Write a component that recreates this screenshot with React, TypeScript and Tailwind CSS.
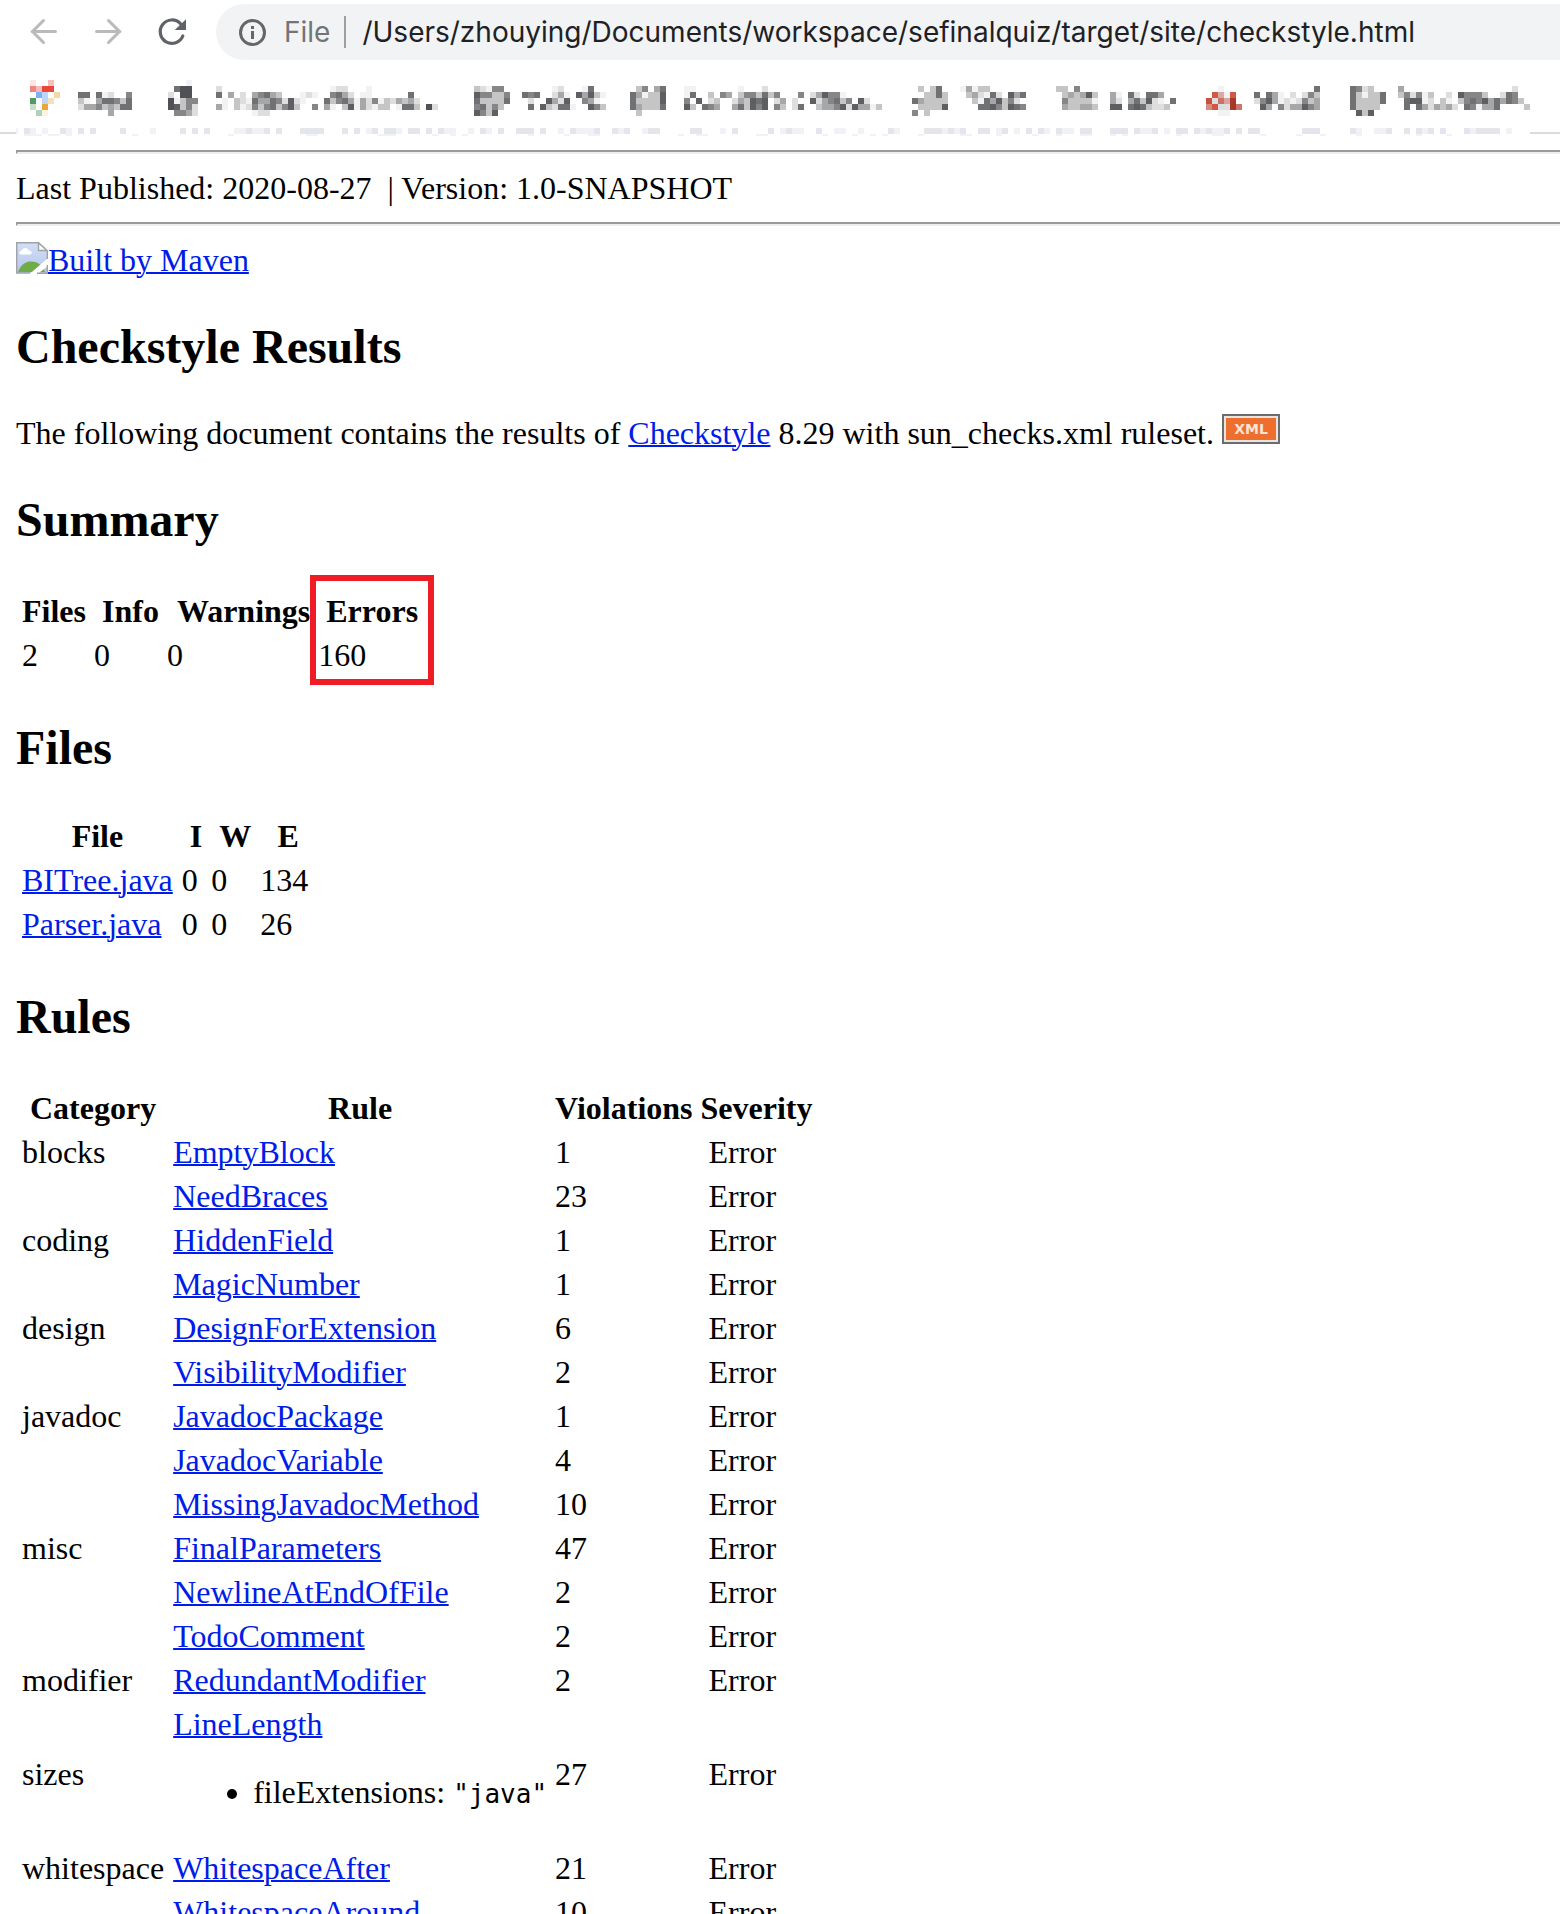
import React from "react";

const CELL = 6;

const PALETTE: Record<string, string> = {
  "1": "#f2f2f2",
  "2": "#dedede",
  "3": "#c5c5c5",
  "4": "#a6a7a9",
  "5": "#868688",
  "6": "#707173",
  "7": "#5e5f62",
  "8": "#505157",
  A: "#fbe8e6",
  B: "#f5c0bc",
  C: "#ef8680",
  D: "#f5bcb8",
  E: "#e8483c",
  F: "#7fb0f4",
  G: "#bcd6f8",
  H: "#f6d7a8",
  I: "#539a60",
  J: "#f5dfbc",
  K: "#c8dfcc",
  L: "#eaa636",
  M: "#b0d2b8",
  N: "#fdf3e4",
  P: "#d05848",
  Q: "#dba9a4",
  R: "#c8503f",
  S: "#c87368",
  T: "#d9a5a0",
  U: "#a83828",
  V: "#d98a80",
  W: "#c8776c",
  a: "#e5e6eb",
  b: "#f1f2f5",
};

const DOTS18 = "..................";

const BOOKMARKS: { name: string; cols: number; rows: string[] }[] = [
  {
    name: "Bookmark 1",
    cols: 19,
    rows: ["A..B", "CDEE", ".FG.H...66.612..5", "I.GJ....31.466536", "K.L.....244534366", ".MN..........4"],
  },
  {
    name: "Bookmark 2",
    cols: 47,
    rows: [
      "...1",
      ".688....2" + DOTS18 + "122...1",
      "2.88....6.4.2.45643...121..5642.11......6",
      "81355....1.321644652721...6356414251324342",
      "87352...41.31253563573..5.41.37142133.1663.82",
      ".5542.........122",
    ],
  },
  {
    name: "Bookmark 3",
    cols: 22,
    rows: ["", "32155........12...16", "755335..656..241.74731", "633336...2..7427..541", "56353....6.732661..753", "7537"],
  },
  {
    name: "Bookmark 4",
    cols: 43,
    rows: [
      "",
      ".35.46...11.......1...2",
      "641337...16..3.54.3553635...5.247551",
      "633337...5.7.23..243767.24.2..7245635.72",
      "643336...73.654..463757.53.26..34457274413",
      ".3",
    ],
  },
  {
    name: "Bookmark 5",
    cols: 20,
    rows: ["", ".3.36...14133", "..3363...342162.746", "643333....31647352", ".33337.....66753765", "5.3"],
  },
  {
    name: "Bookmark 6",
    cols: 21,
    rows: ["", "33.5", ".343473..41.62.664", ".533331..42.463721.6", ".433443..77.6763223", ""],
  },
  {
    name: "Bookmark 7",
    cols: 20,
    rows: ["", "..1...............6", ".PQ1P...6.641.2.253", "R2STU...25741212534", "VP22UW...74.5244754", "..11"],
  },
  {
    name: "Bookmark 8",
    cols: 30,
    rows: [
      "",
      "6523....4" + DOTS18 + "2",
      "631336..352513..2.75553..265",
      "633336...67712.31.35657464653",
      "63333....6.6424342.651446....3",
      ".737",
    ],
  },
];

function Mosaic({ cols, rows }: { cols: number; rows: string[] }) {
  return (
    <svg width={cols * CELL} height={rows.length * CELL} shapeRendering="crispEdges" aria-hidden="true" className="block">
      {rows.map((row, y) =>
        row.split("").map((c, x) =>
          PALETTE[c] ? <rect key={`${x}-${y}`} x={x * CELL} y={y * CELL} width={CELL} height={CELL} fill={PALETTE[c]} /> : null,
        ),
      )}
    </svg>
  );
}

/* Grid columns of the pixelated strip along the bottom edge of the bookmarks bar. */
const STRIP_DARK = [
  4, 10, 13, 15, 20, 30, 32, 34, 41, 44, 46, 50, 51, 52, 53, 57, 59, 62, 64, 65, 68, 69, 71, 73, 80, 83, 86, 87, 88, 90, 95,
  99, 102, 104, 108, 109, 115, 116, 122, 128, 131, 136, 148, 154, 155, 156, 158, 160, 163, 164, 167, 171, 173, 176, 180, 181,
  185, 186, 187, 189, 192, 196, 197, 199, 201, 204, 206, 208, 209, 217, 218, 219, 225, 231, 234, 236, 238, 240, 244, 246, 247,
  248, 249,
];
const STRIP_LIGHT = [
  5, 7, 11, 25, 39, 40, 42, 43, 61, 66, 74, 75, 78, 81, 93, 96, 97, 98, 103, 107, 120, 130, 132, 133, 139, 140, 143, 149, 157,
  159, 166, 169, 174, 177, 178, 190, 191, 194, 200, 202, 203, 226, 229, 230, 237, 245, 251,
];
const STRIP_LOWER = [
  4, 5, 6, 8, 9, 11, 22, 38, 51, 52, 63, 64, 65, 72, 75, 77, 88, 94, 98, 99, 113, 116, 117, 126, 127, 137, 142, 145, 147, 153,
  160, 161, 166, 172, 176, 180, 181, 185, 187, 196, 202, 203, 210, 216, 220, 226, 236, 241,
];

function Strip() {
  const x = (c: number) => (c - 3) * CELL + 2;
  return (
    <svg width={1514} height={8} shapeRendering="crispEdges" aria-hidden="true" className="block shrink-0">
      <rect x={0} y={0} width={2} height={6} fill={PALETTE.b} />
      {STRIP_DARK.map((c) => (
        <rect key={c} x={x(c)} y={0} width={CELL} height={6} fill={PALETTE.a} />
      ))}
      {STRIP_LIGHT.map((c) => (
        <rect key={c} x={x(c)} y={0} width={CELL} height={6} fill={PALETTE.b} />
      ))}
      {STRIP_LOWER.map((c) => (
        <rect key={`l${c}`} x={x(c)} y={6} width={CELL} height={2} fill={PALETTE.b} />
      ))}
    </svg>
  );
}

function BrowserBar() {
  return (
    <header className="shrink-0 font-[Inter,'Liberation_Sans',sans-serif]">
      <div className="flex items-center pt-1">
        <nav className="flex w-54 shrink-0 items-center gap-8 pl-7" aria-label="History">
          <button type="button" aria-label="Back">
            <svg width="32" height="32" viewBox="0 0 32 32" fill="none" stroke="#b9babc" strokeWidth="3" strokeLinecap="round" className="block">
              <path d="M27.500 15.500H4M15.500 4.500L4.500 15.500L15.500 26.500" />
            </svg>
          </button>
          <button type="button" aria-label="Forward">
            <svg width="32" height="32" viewBox="0 0 32 32" fill="none" stroke="#b9babc" strokeWidth="3" strokeLinecap="round" className="block">
              <path d="M4.500 15.500H28M16.500 4.500L27.500 15.500L16.500 26.500" />
            </svg>
          </button>
          <button type="button" aria-label="Reload">
            <svg width="32" height="32" viewBox="0 0 32 32" fill="none" className="block">
              <path d="M24.400 7.600A11.700 11.700 0 1 0 26.800 20" stroke="#5f6368" strokeWidth="3.200" strokeLinecap="round" />
              <path d="M30 3.300V14H18.700Z" fill="#5f6368" />
            </svg>
          </button>
        </nav>
        <div className="flex h-14 flex-1 items-center rounded-l-full bg-[#f1f3f4] pl-5.5">
          <svg width="28" height="28" viewBox="0 0 28 28" fill="none" stroke="#646668" strokeWidth="3" className="block shrink-0">
            <circle cx="14.500" cy="14.500" r="12" />
            <path d="M14.500 13V21M14.500 8V11" />
          </svg>
          <label htmlFor="address" className="ml-4.5 text-[28px] text-[#727476]">
            File
          </label>
          <span className="ml-3.5 h-8 w-0.5 bg-[#9c9ea0]" />
          <input
            id="address"
            type="text"
            readOnly
            value="/Users/zhouying/Documents/workspace/sefinalquiz/target/site/checkstyle.html"
            className="ml-4 min-w-0 flex-1 bg-transparent text-[28px] text-[#202124] outline-none"
          />
        </div>
      </div>
      <nav className="flex gap-6 pt-5 pb-3 pl-7.5" aria-label="Bookmarks">
        {BOOKMARKS.map((b) => (
          <a key={b.name} href="#bookmark" aria-label={b.name} className="shrink-0">
            <Mosaic cols={b.cols} rows={b.rows} />
          </a>
        ))}
      </nav>
      <div className="flex">
        <span className="mt-1 h-0.5 w-4 shrink-0 bg-[#dadbe0]" />
        <Strip />
        <span className="mt-1 h-0.5 flex-1 bg-[#dadbe0]" />
      </div>
    </header>
  );
}

function BrokenImage() {
  return (
    <svg width="32" height="32" viewBox="0 0 32 32" className="inline-block align-top" aria-hidden="true">
      <defs>
        <linearGradient id="sky" x1="0" y1="0" x2="0" y2="1">
          <stop offset="0" stopColor="#d3dff5" />
          <stop offset="1" stopColor="#b4c6ee" />
        </linearGradient>
      </defs>
      <path d="M1 1H22.5L31 9V31H1Z" fill="url(#sky)" />
      <path d="M2 30C5 22 10 19.5 15 19.5C22 19.5 27 24 29 30Z" fill="#6fab46" />
      <path d="M5 12.5C2.500 12.500 2.800 8.800 5.500 8.800C6.500 5 12 5 12.800 8.500C16.500 8.500 16.500 12.500 14 12.500Z" fill="#fff" />
      <path d="M13.500 32L32 16V24L21.500 32Z" fill="#fff" />
      <path d="M14 31H0.700V0.700H22.500L31.300 9V17M31.300 23V31.300H21" fill="none" stroke="#a0a2a6" strokeWidth="1.400" />
      <path d="M22.500 1V8.500H31Z" fill="#fff" stroke="#a0a2a6" strokeWidth="1.400" />
    </svg>
  );
}

function Link({ children }: { children: React.ReactNode }) {
  return (
    <a href="#link" className="text-[#001ce8] underline decoration-2">
      {children}
    </a>
  );
}

const Rule = () => <hr className="h-1 border-2 border-r-0 border-t-[#9a9a9a] border-b-[#eeeeee] border-l-[#9a9a9a]" />;

const Heading = ({ children }: { children: React.ReactNode }) => (
  <h2 className="mt-[41px] mb-[39px] text-[48px] leading-[56px] font-bold">{children}</h2>
);

const TABLE = "border-separate border-spacing-1 [&_td]:p-0.5 [&_th]:p-0.5 [&_th]:text-center whitespace-nowrap";
const FILES_TABLE =
  "-mt-[3px] border-separate border-spacing-1 [&_td]:p-0.5 [&_td]:pr-[3px] [&_th]:p-0.5 [&_th]:pr-[3px] [&_th]:text-center whitespace-nowrap";

const RULES: [string, string, number][] = [
  ["blocks", "EmptyBlock", 1],
  ["", "NeedBraces", 23],
  ["coding", "HiddenField", 1],
  ["", "MagicNumber", 1],
  ["design", "DesignForExtension", 6],
  ["", "VisibilityModifier", 2],
  ["javadoc", "JavadocPackage", 1],
  ["", "JavadocVariable", 4],
  ["", "MissingJavadocMethod", 10],
  ["misc", "FinalParameters", 47],
  ["", "NewlineAtEndOfFile", 2],
  ["", "TodoComment", 2],
  ["modifier", "RedundantModifier", 2],
  ["sizes", "LineLength", 27],
  ["whitespace", "WhitespaceAfter", 21],
  ["", "WhitespaceAround", 10],
];

export default function App() {
  return (
    <div className="flex h-screen flex-col overflow-hidden bg-white text-black">
      <BrowserBar />
      <main className="min-h-0 flex-1 overflow-hidden pt-3.5 pl-4 font-['Liberation_Serif','Times_New_Roman',serif] text-[32px] leading-[36px]">
        <Rule />
        <div className="my-4">Last Published: 2020-08-27 &nbsp;| Version: 1.0-SNAPSHOT</div>
        <Rule />
        <div className="mt-4">
          <BrokenImage />
          <Link>Built by Maven</Link>
        </div>

        <Heading>Checkstyle Results</Heading>
        <p>
          The following document contains the results of <Link>Checkstyle</Link> 8.29 with sun_checks.xml ruleset.{" "}
          <a
            href="#rss"
            className="inline-block h-[30px] w-[58px] overflow-hidden border-2 border-[#6c6c6c] bg-[#ee6f2d] text-center font-['DejaVu_Sans',sans-serif] text-[14px] leading-[26px] font-bold text-[#fbe3d6] inset-ring-2 inset-ring-[#e9e4e0]"
          >
            XML
          </a>
        </p>

        <Heading>Summary</Heading>
        <div className="relative">
          <table className={TABLE}>
            <thead>
              <tr>
                <th>Files</th>
                <th>&nbsp;Info</th>
                <th>
                  <span className="ml-0.5">&nbsp;Warnings</span>
                </th>
                <th>&nbsp;Errors</th>
              </tr>
            </thead>
            <tbody>
              <tr>
                <td>2</td>
                <td>0</td>
                <td>0</td>
                <td>160</td>
              </tr>
            </tbody>
          </table>
          <div className="absolute -top-3 left-[294px] h-[110px] w-[124px] border-6 border-[#ee1c25]" />
        </div>

        <Heading>Files</Heading>
        <table className={FILES_TABLE}>
          <thead>
            <tr>
              <th>File</th>
              <th>&nbsp;I</th>
              <th>&nbsp;W</th>
              <th>&nbsp;E</th>
            </tr>
          </thead>
          <tbody>
            <tr>
              <td>
                <Link>BITree.java</Link>
              </td>
              <td>0</td>
              <td>0</td>
              <td>134</td>
            </tr>
            <tr>
              <td>
                <Link>Parser.java</Link>
              </td>
              <td>0</td>
              <td>0</td>
              <td>26</td>
            </tr>
          </tbody>
        </table>

        <Heading>Rules</Heading>
        <table className={TABLE}>
          <thead>
            <tr>
              <th>
                <span className="mr-px">Category</span>
              </th>
              <th>Rule</th>
              <th>Violations</th>
              <th>Severity</th>
            </tr>
          </thead>
          <tbody>
            {RULES.map(([category, rule, count]) => (
              <tr key={rule}>
                <td>
                  <span className="mr-px">{category}</span>
                </td>
                <td>
                  <Link>{rule}</Link>
                  {rule === "LineLength" && (
                    <ul className="my-8 list-disc pl-20">
                      <li>
                        fileExtensions:{" "}
                        <code className="font-['DejaVu_Sans_Mono',monospace] text-[26px] leading-none">"java"</code>
                      </li>
                    </ul>
                  )}
                </td>
                <td>{count}</td>
                <td>&nbsp;Error</td>
              </tr>
            ))}
          </tbody>
        </table>
      </main>
    </div>
  );
}
